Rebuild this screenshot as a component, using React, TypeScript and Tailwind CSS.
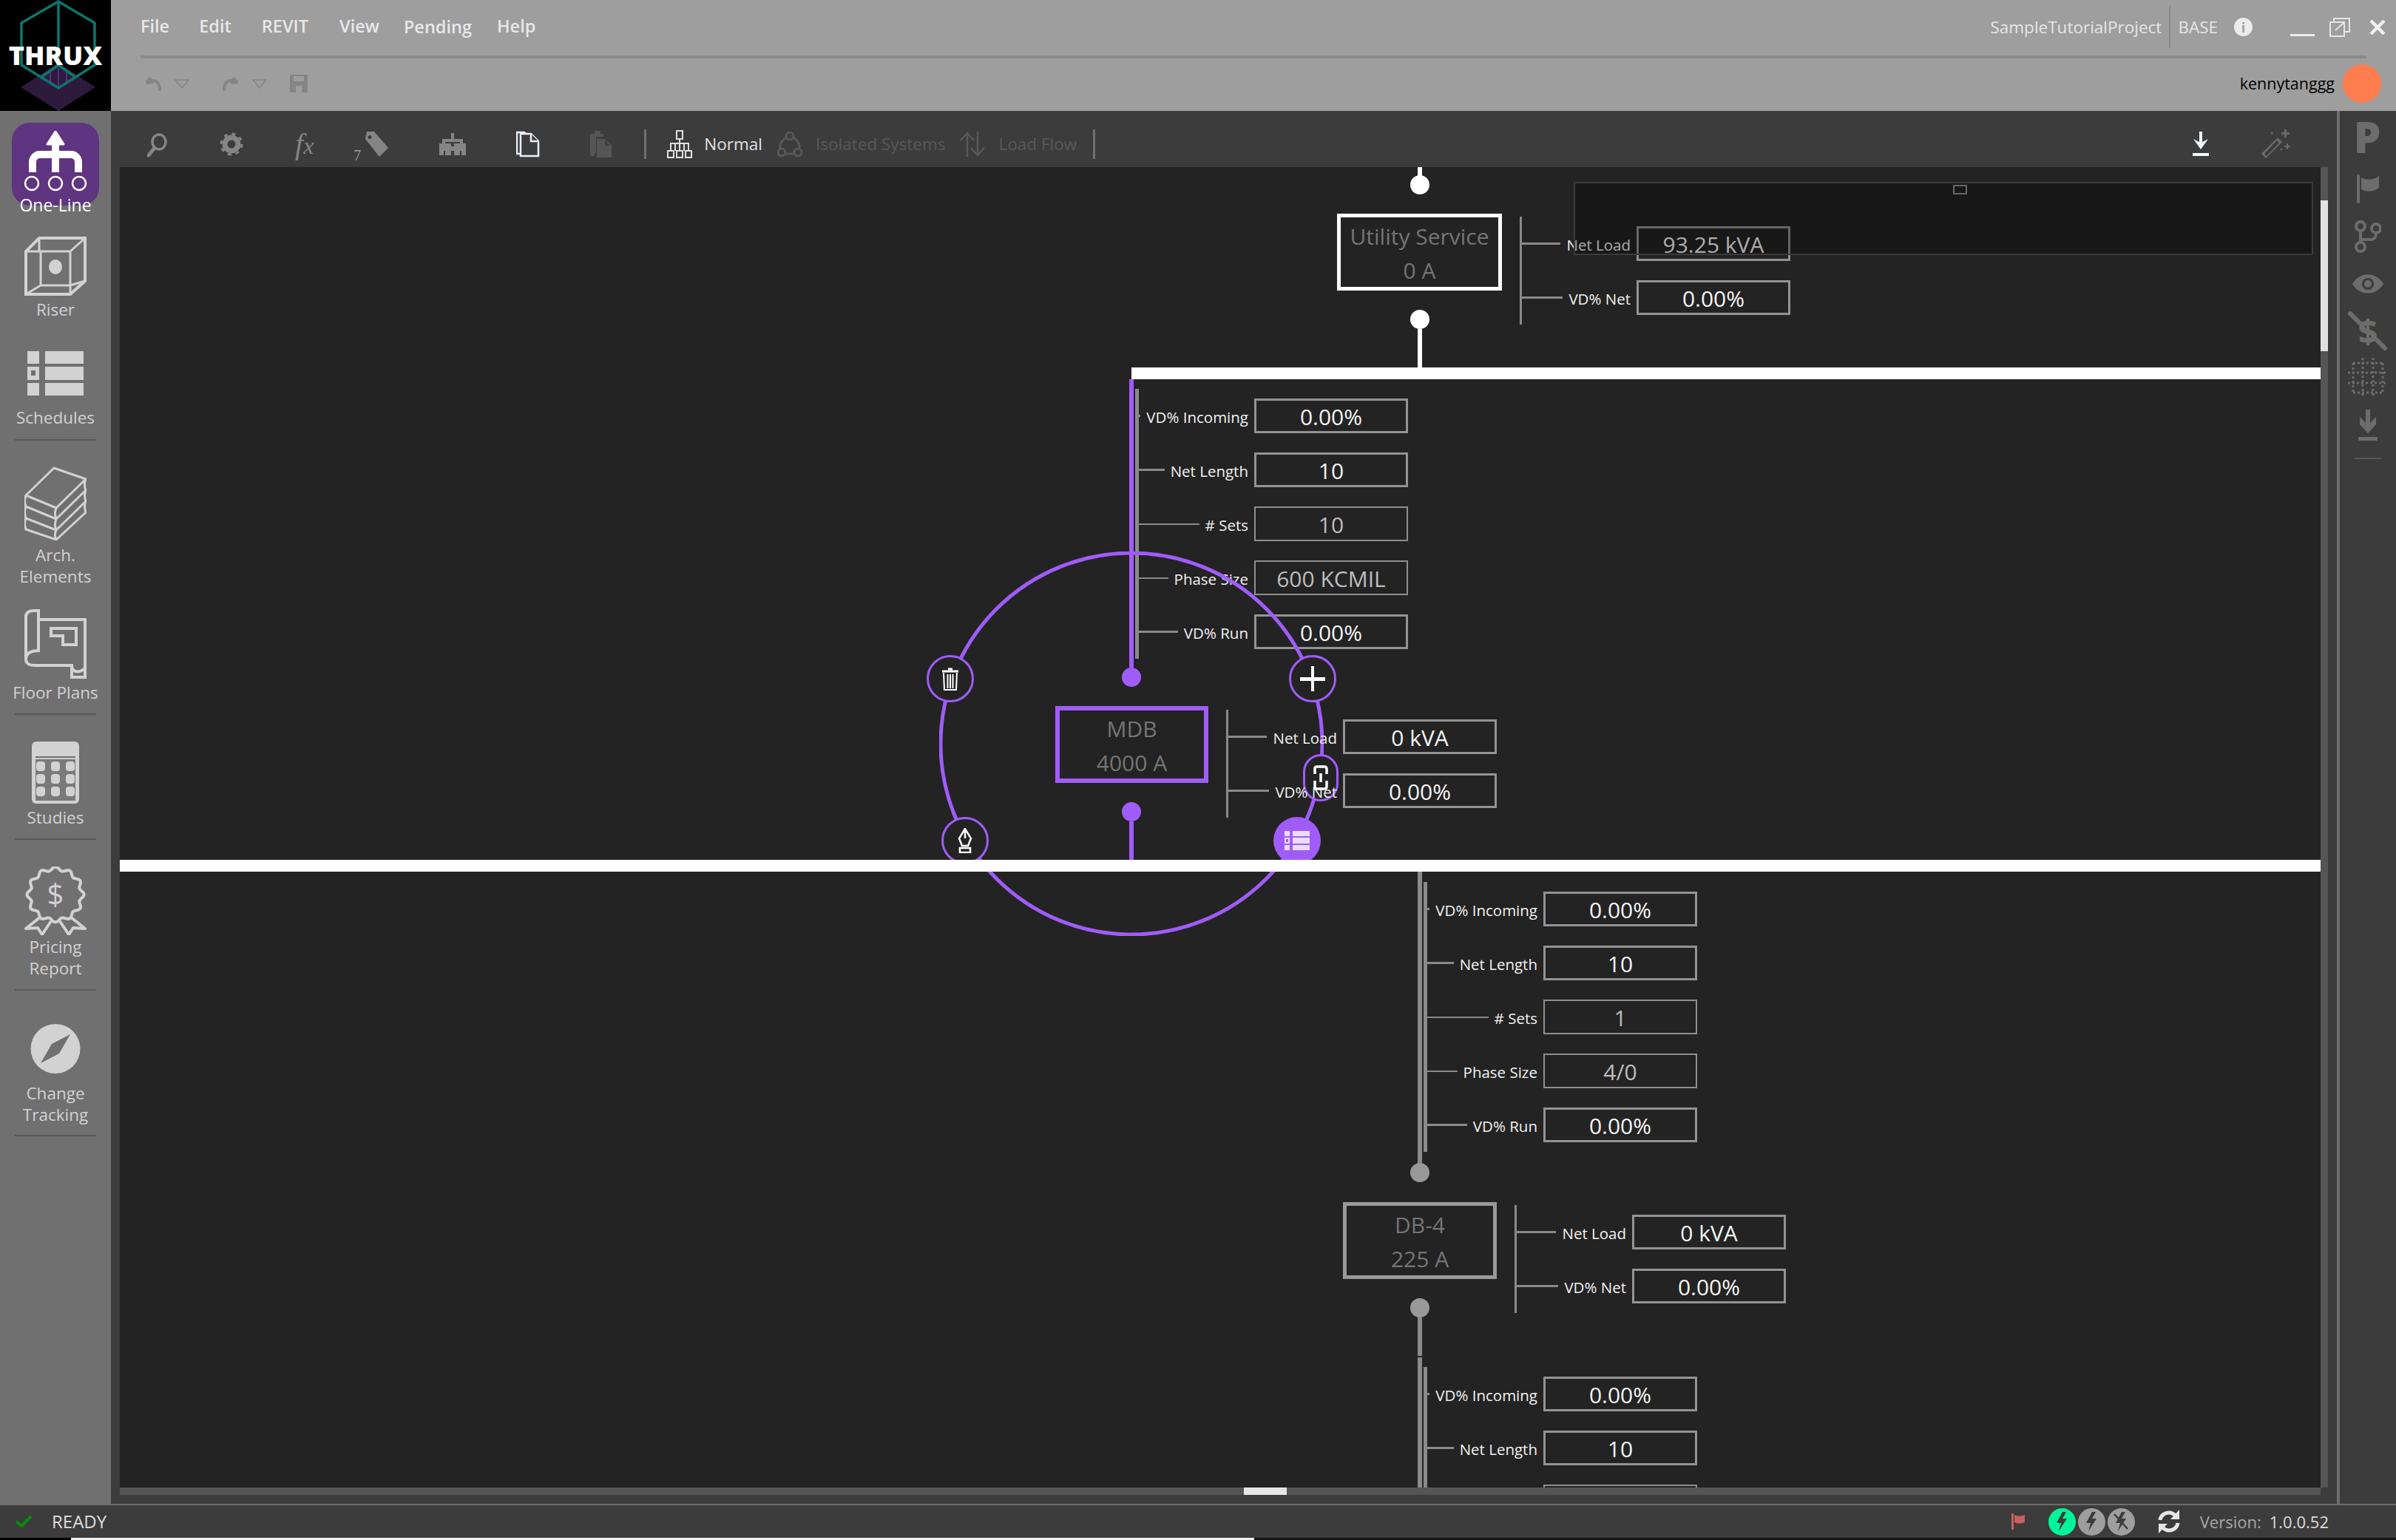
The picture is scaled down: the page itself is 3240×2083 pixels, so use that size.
import React from "react";

type RowData = { label: string; value: string; dim?: boolean };

const incoming = (sets: string, size: string): RowData[] => [
  { label: "VD% Incoming", value: "0.00%" },
  { label: "Net Length", value: "10" },
  { label: "# Sets", value: sets, dim: true },
  { label: "Phase Size", value: size, dim: true },
  { label: "VD% Run", value: "0.00%" },
];

function Row({ label, value, dim }: RowData) {
  return (
    <div className="flex items-center h-[47px]">
      <div className={dim ? "flex-1 h-[2px] bg-[#8a8a8a]" : "flex-1 h-[3px] bg-[#8a8a8a]"} />
      <span className="ml-2 mt-[3px] text-[20.5px] text-[#f2f2f2] whitespace-nowrap">{label}</span>
      <div
        className={
          dim
            ? "ml-2 w-[208px] h-[47px] shrink-0 border-2 border-[#8f8f8f] pt-[2px] flex items-center justify-center text-[30px] text-[#bdbdbd]"
            : "ml-2 w-[208px] h-[47px] shrink-0 border-[3px] border-[#939393] pt-[2px] flex items-center justify-center text-[30px] text-[#f5f5f5]"
        }
      >
        {value}
      </div>
    </div>
  );
}

function Block({ rows, className }: { rows: RowData[]; className: string }) {
  return (
    <div className={"absolute flex flex-col gap-[26px] py-[13px] border-[#8a8a8a] " + className}>
      {rows.map((r, i) => (
        <Row key={i} {...r} />
      ))}
    </div>
  );
}

function Node({ lines, className }: { lines: string[]; className: string }) {
  return (
    <div className={"absolute h-[104px] pt-[3px] flex flex-col items-center justify-center text-[30px] leading-[46px] text-[#757575] " + className}>
      {lines.map((l) => (
        <div key={l}>{l}</div>
      ))}
    </div>
  );
}

function Dot({ className }: { className: string }) {
  return <div className={"absolute w-[26px] h-[26px] rounded-full " + className} />;
}

function Ring({ className, children }: { className: string; children: React.ReactNode }) {
  return (
    <div className={"absolute h-[64px] rounded-full flex items-center justify-center " + className}>
      {children}
    </div>
  );
}

function NavItem({
  label,
  icon,
  gap,
  divider,
  className,
}: {
  label: string[];
  icon: React.ReactNode;
  gap: string;
  divider?: string;
  className: string;
}) {
  return (
    <div className={"flex flex-col items-center " + className}>
      {icon}
      <div className={"text-center text-[22.5px] leading-[29px] text-[#d2d2d2] " + gap}>
        {label.map((l) => (
          <div key={l}>{l}</div>
        ))}
      </div>
      {divider && <div className={"w-[110px] h-[2px] bg-[#585858] " + divider} />}
    </div>
  );
}

function Logo() {
  return (
    <div className="relative w-[150px] h-[150px] bg-black shrink-0 overflow-hidden">
      <svg width="150" height="150" viewBox="0 0 150 150" className="block">
        <polygon points="28,118 79,85 129,118 79,150" fill="#2e1a3d" />
        <path d="M68 96V112M79 92V118M90 96V112" stroke="#5a2f7d" strokeWidth="2" />
        <path
          d="M79 2L128 31V88L79 119L29 88V31ZM79 2V88M55 105L79 88L103 105"
          fill="none"
          stroke="#0c766d"
          strokeWidth="3.5"
        />
      </svg>
      <div className="absolute left-0 right-0 top-[50px] text-center text-[36px] leading-[50px] font-extrabold text-white">
        THRUX
      </div>
    </div>
  );
}

function ScallopPath() {
  const pts: string[] = [];
  for (let i = 0; i <= 96; i++) {
    const a = (i / 96) * Math.PI * 2;
    const r = 35 + 2.5 * Math.cos(a * 12);
    pts.push((i === 0 ? "M" : "L") + (42 + r * 1.03 * Math.cos(a)).toFixed(1) + " " + (38 + r * Math.sin(a)).toFixed(1));
  }
  return <path d={pts.join(" ") + "Z"} fill="none" stroke="#d2d2d2" strokeWidth="4" />;
}

export default function App() {
  return (
    <div className="w-[3240px] h-[2083px] flex flex-col overflow-hidden bg-[#3c3c3c] [font-family:'Open_Sans',sans-serif]">
      {/* title bar */}
      <header className="h-[150px] flex shrink-0 bg-[#9e9e9e]">
        <Logo />
        <div className="flex-1 flex flex-col">
          <div className="h-[75px] flex items-center pl-[40px] pr-[14px] text-[#e8e8e8]">
            <div className="flex items-center text-[23.5px] font-semibold -mt-[4px]">
              <span>File</span>
              <span className="ml-[40px]">Edit</span>
              <span className="ml-[41px]">REVIT</span>
              <span className="ml-[42px]">View</span>
              <span className="ml-[33px] mt-[2px]">Pending</span>
              <span className="ml-[34px]">Help</span>
            </div>
            <div className="ml-auto flex items-center -mt-[2px] text-[22.5px] text-[#e6e6e6]">
              <span>SampleTutorialProject</span>
              <div className="w-[2px] h-[57px] bg-[#8a8a8a] mx-[10px]" />
              <span>BASE</span>
              <div className="ml-[22px] w-[25px] h-[25px] rounded-full bg-[#ececec] flex items-center justify-center text-[18px] font-bold leading-none text-[#9e9e9e]">
                i
              </div>
              <div className="ml-[51px] mt-[22px] w-[33px] h-[3px] bg-[#ececec]" />
              <svg width="28" height="26" viewBox="0 0 28 26" className="ml-[20px]" fill="none" stroke="#e6e6e6" strokeWidth="2">
                <path d="M6 5V1H27V19H21" />
                <path d="M1 6H20V25H1Z" />
                <path d="M8 17L20 6M13 6H20V12" />
              </svg>
              <svg width="22" height="20" viewBox="0 0 22 20" className="ml-[26px]" stroke="#f0f0f0" strokeWidth="4.5">
                <path d="M2 1L20 19M20 1L2 19" />
              </svg>
            </div>
          </div>
          <div className="h-[4px] mr-[40px] ml-[40px] bg-[#8a8a8a]" />
          <div className="flex-1 flex items-center pl-[45px] pr-[20px] pb-[3px]">
            <svg width="24" height="22" viewBox="0 0 24 22" fill="none" stroke="#858585" strokeWidth="4">
              <path d="M3 10L9 3M3 10L12 9M3 10C10 4 22 6 21 21" />
            </svg>
            <svg width="20" height="13" viewBox="0 0 20 13" className="ml-[17px]" fill="none" stroke="#858585" strokeWidth="1.5">
              <path d="M1 1H19L10 12Z" />
            </svg>
            <svg width="24" height="22" viewBox="0 0 24 22" className="ml-[44px]" fill="none" stroke="#858585" strokeWidth="4">
              <path d="M21 10L15 3M21 10L12 9M21 10C14 4 2 6 3 21" />
            </svg>
            <svg width="20" height="13" viewBox="0 0 20 13" className="ml-[17px]" fill="none" stroke="#858585" strokeWidth="1.5">
              <path d="M1 1H19L10 12Z" />
            </svg>
            <svg width="24" height="24" viewBox="0 0 24 24" className="ml-[31px]" fill="#858585">
              <path d="M0 0H24V24H0ZM5 2V9H19V2ZM8 15V24H16V15Z" fillRule="evenodd" />
            </svg>
            <span className="ml-auto text-[21.5px] text-black">kennytanggg</span>
            <div className="ml-[11px] w-[52px] h-[52px] rounded-full bg-[#ff7d4f]" />
          </div>
        </div>
      </header>

      <div className="flex-1 flex min-h-0">
        {/* left nav */}
        <nav className="w-[150px] shrink-0 bg-[#707070] flex flex-col items-center">
          <div className="mt-[16px] w-[118px] h-[112px] rounded-[24px] bg-[#5f3480] flex flex-col items-center pt-[11px]">
            <svg width="118" height="82" viewBox="0 0 118 82" className="block shrink-0">
              <path d="M59 1L70 18H48Z" fill="#fff" stroke="#fff" strokeWidth="3" strokeLinejoin="round" />
              <rect x="54" y="15" width="10" height="41" fill="#fff" />
              <path d="M28 56V42A10 10 0 0 1 38 32H80A10 10 0 0 1 90 42V56" fill="none" stroke="#fff" strokeWidth="10" />
              <g fill="none" stroke="#fff" strokeWidth="2.5">
                <circle cx="27" cy="71" r="9" />
                <circle cx="59" cy="71" r="9" />
                <circle cx="91" cy="71" r="9" />
              </g>
            </svg>
            <div className="mt-[4px] shrink-0 text-[23px] leading-[28px] text-white">One-Line</div>
          </div>

          <NavItem
            label={["Riser"]}
            className="mt-[42px]"
            gap="mt-[4px]"
            icon={
              <svg width="84" height="80" viewBox="0 0 84 80" fill="none" stroke="#d2d2d2" strokeWidth="4">
                <path d="M2 20L20 2H82V60L62 78H2Z" />
                <path d="M22 20H62V66H22ZM2 20H22M20 2V20M82 2L62 20M82 60L62 66M2 78L22 66M62 78V66" strokeWidth="3" />
                <ellipse cx="42" cy="41" rx="9" ry="10" fill="#d2d2d2" stroke="none" />
              </svg>
            }
          />

          <NavItem
            label={["Schedules"]}
            className="mt-[42px]"
            gap="mt-[15px]"
            divider="mt-[15px]"
            icon={
              <svg width="76" height="60" viewBox="0 0 76 60" fill="#d2d2d2">
                <rect x="0" y="0" width="16" height="17" />
                <rect x="24" y="0" width="52" height="17" />
                <rect x="0" y="21" width="16" height="18" />
                <rect x="5" y="26" width="6" height="7" fill="#707070" />
                <rect x="24" y="21" width="52" height="18" />
                <rect x="0" y="43" width="16" height="17" />
                <rect x="24" y="43" width="52" height="17" />
              </svg>
            }
          />

          <NavItem
            label={["Arch.", "Elements"]}
            className="mt-[35px]"
            gap="mt-[5px]"
            icon={
              <svg width="84" height="100" viewBox="0 0 84 100" fill="none" stroke="#d2d2d2" strokeWidth="3" strokeLinejoin="round">
                <path d="M2 39L40 2L83 17L43 56Z" />
                <path d="M2 39C0 45 0 50 2 54L43 71C41 66 41 61 43 56M43 71L83 32C81 28 81 22 83 17" />
                <path d="M2 54C0 60 0 65 2 70L43 86C41 81 41 76 43 71M43 86L83 47C81 42 81 37 83 32" />
                <path d="M2 70C0 75 0 80 2 85L43 99C41 95 41 90 43 86M43 99L83 62C81 57 81 52 83 47" />
              </svg>
            }
          />

          <NavItem
            label={["Floor Plans"]}
            className="mt-[30px]"
            gap="mt-[4px]"
            divider="mt-[14px]"
            icon={
              <svg width="84" height="94" viewBox="0 0 84 94" fill="none" stroke="#d2d2d2" strokeWidth="4">
                <path d="M19 12V56C8 56 2 60 2 68C2 74 8 76 14 76H64V92H82V14H19" />
                <path d="M2 68V10C2 4 8 2 12 2H19V56" />
                <path d="M64 76C64 84 72 88 82 80" />
                <path d="M36 26H70V48H52V36H36Z" />
              </svg>
            }
          />

          <NavItem
            label={["Studies"]}
            className="mt-[36px]"
            gap="mt-[4px]"
            divider="mt-[14px]"
            icon={
              <svg width="64" height="84" viewBox="0 0 64 84" fill="#d2d2d2">
                <rect x="0" y="0" width="64" height="84" rx="6" />
                <rect x="5" y="24" width="54" height="56" fill="#7a7a7a" />
                {[27, 44, 61].map((y) =>
                  [6, 26, 46].map((x) => <rect key={x + "-" + y} x={x} y={y} width="12" height="13" rx="4" fill="#d2d2d2" />)
                )}
                <path d="M5 21H59" stroke="#707070" strokeWidth="2" />
              </svg>
            }
          />

          <NavItem
            label={["Pricing", "Report"]}
            className="mt-[36px]"
            gap="mt-[1px]"
            divider="mt-[14px]"
            icon={
              <svg width="84" height="93" viewBox="0 0 84 93" fill="none">
                <ScallopPath />
                <text x="42" y="52" textAnchor="middle" fontSize="40" fill="#d2d2d2" fontFamily="Open Sans">
                  $
                </text>
                <path d="M22 68L2 84L18 83L24 92L36 74M62 68L82 84L66 83L60 92L48 74" stroke="#d2d2d2" strokeWidth="4" strokeLinejoin="round" />
              </svg>
            }
          />

          <NavItem
            label={["Change", "Tracking"]}
            className="mt-[45px]"
            gap="mt-[12px]"
            divider="mt-[13px]"
            icon={
              <svg width="68" height="67" viewBox="0 0 68 67">
                <circle cx="34" cy="33.5" r="33.5" fill="#d2d2d2" />
                <path d="M54 14L39 40L14 53L29 27Z" fill="#707070" />
              </svg>
            }
          />
        </nav>

        <div className="flex-1 flex border-b-2 border-[#6e6e6e] min-w-0">
          {/* centre */}
          <div className="w-[3010px] flex flex-col">
            <div className="h-[76px] flex items-center shrink-0 pl-[49px] pt-[14px]">
              <svg width="27" height="40" viewBox="0 0 27 40" fill="none" stroke="#858585" strokeWidth="3.5">
                <ellipse cx="16" cy="17" rx="9" ry="10" />
                <path d="M10 25L2 35" strokeWidth="5" strokeLinecap="round" />
              </svg>
              <svg width="32" height="32" viewBox="0 0 32 32" className="ml-[71px]" fill="none" stroke="#858585">
                <circle cx="16" cy="16" r="9" strokeWidth="7" />
                <circle cx="16" cy="16" r="14" strokeWidth="3" strokeDasharray="5 6" />
              </svg>
              <span className="ml-[70px] text-[40px] leading-none italic text-[#858585] [font-family:'Liberation_Serif',serif]">
                f<span className="text-[32px]">x</span>
              </span>
              <span className="ml-[54px] self-end mb-[4px] text-[20px] leading-[24px] text-[#a0a0a0] [font-family:'Liberation_Serif',serif]">7</span>
              <svg width="32" height="34" viewBox="0 0 32 34" className="ml-[6px]" fill="#858585">
                <path d="M2 0H12L31 22L19 34L0 10ZM6 5A2.5 2.5 0 1 0 6 10A2.5 2.5 0 1 0 6 5Z" fillRule="evenodd" />
              </svg>
              <svg width="36" height="30" viewBox="0 0 36 30" className="ml-[68px]" fill="#858585">
                <path d="M16 0H20V8H32V14H36V30H30V24H28V30H20V24H16V30H8V24H6V30H0V14H4V8H16ZM8 12V14H16V18H20V14H28V12Z" />
              </svg>
              <svg width="32" height="36" viewBox="0 0 32 36" className="ml-[68px]" fill="#3c3c3c" stroke="#e8f0f8" strokeWidth="2.5">
                <path d="M1 2H11L14 5V31H1Z" />
                <path d="M6 4H20L30 14V34H6Z" />
                <path d="M20 4V14H30" />
              </svg>
              <svg width="29" height="36" viewBox="0 0 29 36" className="ml-[68px]" fill="#555">
                <path d="M0 4H6V0H14V4H18V8H0V30H6V34H0Z" />
                <path d="M9 11H20L29 20V36H9ZM20 13V20H27Z" fillRule="evenodd" />
                <rect x="0" y="8" width="8" height="22" />
              </svg>
              <div className="ml-[44px] w-[3px] h-[40px] bg-[#707070]" />
              <svg width="34" height="38" viewBox="0 0 34 38" className="ml-[28px]" fill="none" stroke="#e0e0e0" strokeWidth="2">
                <rect x="13" y="1" width="8" height="11" />
                <path d="M17 12V24M5 28V18H29V28M17 18V28M11 18V28M23 18V28" />
                <rect x="1" y="28" width="8" height="9" />
                <rect x="13" y="28" width="8" height="9" />
                <rect x="25" y="28" width="8" height="9" />
              </svg>
              <span className="ml-[16px] text-[22.5px] text-[#e2e2e2]">Normal</span>
              <svg width="34" height="36" viewBox="0 0 34 36" className="ml-[20px]" fill="none" stroke="#585858" strokeWidth="3">
                <path d="M12 9C5 14 3 20 4 25M22 9C29 14 31 20 30 25M10 31H24" />
                <circle cx="17" cy="7" r="5" />
                <circle cx="6" cy="29" r="5" />
                <circle cx="28" cy="29" r="5" />
              </svg>
              <span className="ml-[18px] text-[22.5px] text-[#585858]">Isolated Systems</span>
              <svg width="36" height="36" viewBox="0 0 36 36" className="ml-[18px]" fill="none" stroke="#585858" strokeWidth="2.5">
                <path d="M11 35V3M2 13L11 3L20 13" />
                <path d="M25 1V33M16 23L25 33L34 23" />
              </svg>
              <span className="ml-[18px] text-[22.5px] text-[#585858]">Load Flow</span>
              <div className="ml-[22px] w-[3px] h-[40px] bg-[#707070]" />
              <div className="ml-auto mr-[62px] flex items-center">
                <svg width="22" height="34" viewBox="0 0 22 34" fill="#f2f8ff">
                  <path d="M9 0H13V14L21 10L11 24L1 10L9 14Z" />
                  <rect x="0" y="29" width="22" height="4" />
                </svg>
                <svg width="42" height="40" viewBox="0 0 42 40" className="ml-[69px]" fill="#6a6a6a">
                  <path d="M2 33L24 11L30 17L8 39ZM6 33L9 36L26 18L23 15Z" fillRule="evenodd" />
                  <path d="M33 0H36V4H40V7H36V11H33V7H29V4H33Z" />
                  <path d="M36 19H38V22H41V24H38V27H36V24H33V22H36Z" />
                  <circle cx="16" cy="5" r="1.5" />
                  <circle cx="29" cy="27" r="1.5" />
                </svg>
              </div>
            </div>

            <div className="flex-1 flex min-h-0 pl-[12px]">
              <div className="w-[2976px] flex flex-col">
                {/* diagram */}
                <div className="relative flex-1 overflow-hidden bg-[#232323]">
                  <div className="absolute left-[1755px] top-0 w-[6px] h-[12px] bg-white" />
                  <Dot className="left-[1745px] top-[11px] bg-white" />
                  <Node
                    lines={["Utility Service", "0 A"]}
                    className="left-[1646px] top-[63px] w-[223px] border-[5px] border-white"
                  />
                  <Dot className="left-[1745px] top-[193px] bg-white" />
                  <div className="absolute left-[1755px] top-[219px] w-[6px] h-[52px] bg-white" />
                  <Block
                    className="left-[1893px] top-[67px] w-[366px] border-l-[3px]"
                    rows={[
                      { label: "Net Load", value: "93.25 kVA" },
                      { label: "VD% Net", value: "0.00%" },
                    ]}
                  />

                  <div className="absolute left-[1365px] top-[287px] w-[6px] h-[390px] bg-[#a05cf8]" />
                  <Block className="left-[1373px] top-[300px] w-[369px] border-l-[5px]" rows={incoming("10", "600 KCMIL")} />
                  <Dot className="left-[1355px] top-[677px] bg-[#a05cf8]" />
                  <Node lines={["MDB", "4000 A"]} className="left-[1265px] top-[729px] w-[207px] border-[6px] border-[#a05cf8]" />
                  <Dot className="left-[1355px] top-[859px] bg-[#a05cf8]" />
                  <div className="absolute left-[1365px] top-[885px] w-[6px] h-[52px] bg-[#a05cf8]" />

                  <svg width="520" height="520" viewBox="0 0 520 520" className="absolute left-[1108px] top-[520px]" fill="none">
                    <circle cx="260" cy="260" r="258" stroke="#a05cf8" strokeWidth="5" />
                  </svg>

                  <Ring className="left-[1091px] top-[660px] w-[64px] bg-[#232323] border-[3px] border-[#a05cf8]">
                    <svg width="24" height="32" viewBox="0 0 24 32" fill="none" stroke="#fff" strokeWidth="2">
                      <path d="M1 6H23" strokeWidth="3" />
                      <path d="M9 3H15" strokeWidth="3" />
                      <path d="M3 8L4 31H20L21 8M8.5 10V29M12 10V29M15.5 10V29" />
                    </svg>
                  </Ring>
                  <Ring className="left-[1581px] top-[660px] w-[64px] bg-[#232323] border-[3px] border-[#a05cf8]">
                    <svg width="34" height="34" viewBox="0 0 34 34" fill="#fff">
                      <rect x="15" y="0" width="4" height="34" />
                      <rect x="0" y="15" width="34" height="5" />
                    </svg>
                  </Ring>
                  <Ring className="left-[1600px] top-[794px] w-[48px] bg-[#232323] border-[3px] border-[#a05cf8]">
                    <svg width="20" height="34" viewBox="0 0 20 34" fill="none" stroke="#fff" strokeWidth="3.5">
                      <path d="M2 12V5C2 3 3 2 5 2H15C17 2 18 3 18 5V12M2 21V29C2 31 3 32 5 32H15C17 32 18 31 18 29V21M10 11V23" />
                    </svg>
                  </Ring>
                  <Ring className="left-[1111px] top-[879px] w-[64px] bg-[#232323] border-[3px] border-[#a05cf8]">
                    <svg width="22" height="34" viewBox="0 0 22 34" fill="none" stroke="#fff" strokeWidth="2.5">
                      <path d="M11 1L3 14L7 24H15L19 14ZM11 1V14" />
                      <rect x="4" y="27" width="14" height="6" />
                    </svg>
                  </Ring>
                  <Ring className="left-[1560px] top-[879px] w-[64px] bg-[#a05cf8]">
                    <svg width="34" height="26" viewBox="0 0 34 26" fill="#ecdcff">
                      <rect x="0" y="0" width="7" height="7" />
                      <rect x="11" y="0" width="23" height="7" />
                      <rect x="0" y="9" width="7" height="8" />
                      <rect x="2" y="11" width="3" height="4" fill="#a05cf8" />
                      <rect x="11" y="9" width="23" height="8" />
                      <rect x="0" y="19" width="7" height="7" />
                      <rect x="11" y="19" width="23" height="7" />
                    </svg>
                  </Ring>

                  <Block
                    className="left-[1496px] top-[734px] w-[366px] border-l-[3px]"
                    rows={[
                      { label: "Net Load", value: "0 kVA" },
                      { label: "VD% Net", value: "0.00%" },
                    ]}
                  />

                  <div className="absolute left-[1368px] right-0 top-[271px] h-[16px] bg-white" />
                  <div className="absolute left-0 right-0 top-[937px] h-[16px] bg-white" />

                  <div className="absolute left-[1755px] top-[953px] w-[6px] h-[400px] bg-[#8a8a8a]" />
                  <Block className="left-[1763px] top-[967px] w-[370px] border-l-[5px]" rows={incoming("1", "4/0")} />
                  <Dot className="left-[1745px] top-[1347px] bg-[#999999]" />
                  <Node lines={["DB-4", "225 A"]} className="left-[1654px] top-[1400px] w-[208px] border-[5px] border-[#999999]" />
                  <Block
                    className="left-[1886px] top-[1404px] w-[367px] border-l-[3px]"
                    rows={[
                      { label: "Net Load", value: "0 kVA" },
                      { label: "VD% Net", value: "0.00%" },
                    ]}
                  />
                  <Dot className="left-[1745px] top-[1530px] bg-[#999999]" />
                  <div className="absolute left-[1755px] top-[1556px] w-[6px] h-[52px] bg-[#8a8a8a]" />
                  <div className="absolute left-[1755px] top-[1610px] w-[6px] h-[200px] bg-[#8a8a8a]" />
                  <Block
                    className="left-[1763px] top-[1623px] w-[370px] border-l-[5px]"
                    rows={[
                      { label: "VD% Incoming", value: "0.00%" },
                      { label: "Net Length", value: "10" },
                      { label: "", value: "", dim: true },
                    ]}
                  />

                  {/* minimap */}
                  <div className="absolute left-[1966px] top-[20px] w-[1000px] h-[99px] bg-black/30 border-2 border-[#3a3a3a]">
                    <div className="absolute left-[511px] top-[2px] w-[19px] h-[13px] border-2 border-[#666666]" />
                  </div>
                </div>
                <div className="h-[10px] shrink-0 bg-[#555555] flex">
                  <div className="ml-[1520px] w-[58px] bg-[#e6e6e6]" />
                </div>
              </div>
              <div className="w-[10px] shrink-0 bg-[#555555] flex flex-col mb-[10px]">
                <div className="mt-[45px] h-[204px] bg-[#e0e0e0]" />
              </div>
            </div>
            <div className="h-[12px] shrink-0" />
          </div>

          <div className="w-[4px] shrink-0 bg-[#6e6e6e]" />

          {/* right rail */}
          <aside className="w-[76px] shrink-0 flex flex-col items-center pt-[4px]">
            <span className="mt-[1px] text-[58px] leading-[60px] font-extrabold text-[#6c6c6c] -ml-[2px]">P</span>
            <svg width="30" height="40" viewBox="0 0 30 40" className="mt-[21px]" fill="#6c6c6c">
              <rect x="0" y="0" width="4" height="39" rx="2" />
              <path d="M6 4C12 8 22 8 30 2V18C22 24 12 24 6 20Z" />
            </svg>
            <svg width="36" height="44" viewBox="0 0 36 44" className="mt-[22px]" fill="none" stroke="#6c6c6c" strokeWidth="4">
              <circle cx="8" cy="8" r="6" />
              <circle cx="8" cy="36" r="6" />
              <circle cx="29" cy="11" r="6" />
              <path d="M8 14V30M8 26H22C27 26 29 24 29 17" />
            </svg>
            <svg width="42" height="26" viewBox="0 0 42 26" className="mt-[29px]">
              <path d="M0 13C10 -4 32 -4 42 13C32 30 10 30 0 13Z" fill="#6c6c6c" />
              <circle cx="21" cy="13" r="8" fill="#3c3c3c" />
              <circle cx="21" cy="13" r="5" fill="#6c6c6c" />
            </svg>
            <div className="relative mt-[24px] w-[54px] h-[55px] flex items-center justify-center">
              <svg width="54" height="55" viewBox="0 0 54 55" className="absolute inset-0">
                <path d="M1 1L52 52" stroke="#6c6c6c" strokeWidth="6" />
                <path d="M17 17L37 37" stroke="#3c3c3c" strokeWidth="12" />
              </svg>
              <span className="relative text-[44px] leading-[55px] font-extrabold text-[#6c6c6c]">$</span>
            </div>
            <svg width="56" height="56" viewBox="0 0 56 56" className="mt-[7px]" fill="none" stroke="#6c6c6c" strokeWidth="3" strokeDasharray="3 3">
              <path d="M1 21H55M1 35H55M21 1V55M35 1V55M8 8H48M8 48H48M8 8V48M48 8V48" />
            </svg>
            <svg width="26" height="42" viewBox="0 0 26 42" className="mt-[15px]" fill="#6c6c6c">
              <path d="M10 0H16V18L24 10V20L13 32L2 20V10L10 18Z" />
              <rect x="0" y="37" width="26" height="5" />
            </svg>
            <div className="mt-[23px] w-[36px] h-[2px] bg-[#585858]" />
          </aside>
        </div>
      </div>

      {/* status bar */}
      <footer className="h-[44px] shrink-0 flex items-center pl-[21px] pr-[91px] bg-[#3c3c3c]">
        <svg width="22" height="18" viewBox="0 0 22 18" fill="none" stroke="#0a8a0a" strokeWidth="4">
          <path d="M1 9L8 15L21 2" />
        </svg>
        <span className="ml-[27px] text-[24px] text-[#dcdcdc]">READY</span>
        <svg width="18" height="22" viewBox="0 0 18 22" className="ml-auto" fill="#c9605c">
          <rect x="0" y="0" width="3" height="22" />
          <path d="M4 2C9 4 13 4 18 2V12C13 14 9 14 4 12Z" />
        </svg>
        <div className="ml-[32px] flex gap-[3px]">
          <div className="w-[37px] h-[37px] rounded-full bg-[#00f59b] flex items-center justify-center">
            <svg width="16" height="26" viewBox="0 0 16 26" fill="#3c3c3c">
              <path d="M9 0L1 15H7L4 26L15 9H9L14 0Z" />
            </svg>
          </div>
          <div className="w-[37px] h-[37px] rounded-full bg-[#9e9e9e] flex items-center justify-center">
            <svg width="16" height="26" viewBox="0 0 16 26" fill="#3c3c3c">
              <path d="M9 0L1 15H7L4 26L15 9H9L14 0Z" />
            </svg>
          </div>
          <div className="w-[37px] h-[37px] rounded-full bg-[#9e9e9e] flex items-center justify-center">
            <svg width="22" height="26" viewBox="0 0 22 26" fill="#3c3c3c">
              <path d="M12 0L4 15H10L7 26L18 9H12L17 0Z" />
              <path d="M2 3L20 23" stroke="#3c3c3c" strokeWidth="2.5" />
            </svg>
          </div>
        </div>
        <svg width="30" height="36" viewBox="0 0 30 36" className="ml-[31px]" fill="none" stroke="#e6e6e6" strokeWidth="5">
          <path d="M3 16C4 9 10 6 15 6C19 6 22 8 25 11" />
          <path d="M27 20C26 27 20 30 15 30C11 30 8 28 5 25" />
          <path d="M29 2V15H17Z" fill="#e6e6e6" stroke="none" />
          <path d="M1 34V21H13Z" fill="#e6e6e6" stroke="none" />
        </svg>
        <span className="ml-[27px] text-[22px] text-[#a8a8a8]">Version:</span>
        <span className="ml-[11px] text-[22px] text-[#dcdcdc]">1.0.0.52</span>
      </footer>
      <div className="h-[3px] shrink-0 flex">
        <div className="w-[96px] bg-black" />
        <div className="w-[1600px] bg-[#f0f0f0]" />
        <div className="flex-1 bg-[#141414]" />
      </div>
    </div>
  );
}
